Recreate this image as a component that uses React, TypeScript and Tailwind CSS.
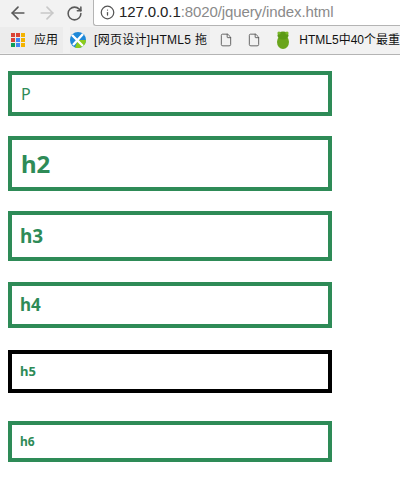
import { RotateCw, ArrowLeft, ArrowRight, Info, File } from 'lucide-react'

const GREEN = 'border-[#2e8b57]'

function AppsIcon() {
  const colors = ['#db4437', '#db4437', '#f4b400', '#db4437', '#4285f4', '#f4b400', '#0f9d58', '#4285f4', '#f4b400']
  return (
    <div className="grid grid-cols-3 gap-px w-[14px] h-[14px]">
      {colors.map((c, i) => <svg key={i} width="4" height="4"><rect width="4" height="4" fill={c} /></svg>)}
    </div>
  )
}

function BallIcon() {
  return (
    <svg width="16" height="16" viewBox="0 0 16 16" className="shrink-0">
      <circle cx="8" cy="8" r="8" fill="#1e88d8" />
      <path d="M8 8 L16 8 A8 8 0 0 1 5 15.4 Z" fill="#8ccc1a" />
      <path d="M2 3 L13 14 M13 2 L3 13" stroke="#fff" strokeWidth="2.4" />
    </svg>
  )
}

function FrogIcon() {
  return (
    <svg width="14" height="18" viewBox="0 0 14 18" className="shrink-0">
      <ellipse cx="7" cy="11" rx="6" ry="7" fill="#6aa51c" />
      <ellipse cx="7" cy="4.5" rx="5.5" ry="4" fill="#5b9a16" />
      <circle cx="3" cy="2" r="1.6" fill="#7ab82a" />
      <circle cx="11" cy="2" r="1.6" fill="#7ab82a" />
    </svg>
  )
}

export default function App() {
  return (
    <div className="h-[481px] w-[400px] overflow-hidden bg-white font-['Noto_Sans',sans-serif]">
      <div className="h-[55px] bg-[#f2f2f2] border-b border-[#b4b4b4] font-['Liberation_Sans','Noto_Sans_CJK_SC',sans-serif]">
        <div className="flex h-[26px] items-center pl-[8px]">
          <ArrowLeft size={20} strokeWidth={2} className="text-[#5a5a5a] shrink-0" />
          <ArrowRight size={20} strokeWidth={2} className="ml-[9px] text-[#c8c8c8] shrink-0" />
          <RotateCw size={17} strokeWidth={2.2} className="ml-[9px] text-[#5a5a5a] shrink-0" />
          <div className="ml-[10px] flex h-[26px] flex-1 items-center rounded-bl-[3px] border-b border-l border-[#b4b4b4] bg-white pl-[6px]">
            <Info size={15} className="text-[#555] shrink-0" />
            <span className="ml-[4px] text-[15px] tracking-[-0.1px] text-[#222]">127.0.0.1</span>
            <span className="text-[15px] tracking-[-0.1px] text-[#8a8a8a]">:8020/jquery/index.html</span>
          </div>
        </div>
        <div className="flex h-[28px] items-center whitespace-nowrap text-[12px] text-[#111]">
          <div className="flex h-[26px] w-[64px] items-center bg-[#ececec] pl-[11px]">
            <AppsIcon />
            <span className="ml-[9px]">应用</span>
          </div>
          <div className="ml-[7px] flex h-[26px] w-[143px] items-center overflow-hidden bg-[#ececec]">
            <BallIcon />
            <span className="ml-[8px] tracking-[0.3px]">[网页设计]HTML5 拖</span>
          </div>
          <File size={14} strokeWidth={1.5} className="ml-[9px] text-[#555] shrink-0" />
          <File size={14} strokeWidth={1.5} className="ml-[14px] text-[#555] shrink-0" />
          <div className="ml-[15px] shrink-0"><FrogIcon /></div>
          <span className="ml-[9px]">HTML5中40个最重</span>
        </div>
      </div>

      <div className="mt-[16px] ml-[8px] flex w-[324px] flex-col text-[#2e8b57]">
        <div className={`flex h-[45px] items-center border-4 ${GREEN} pl-[9px] text-[16px]`}>
          <p>P</p>
        </div>
        <div className={`mt-[20px] flex h-[55px] items-center border-4 ${GREEN} pl-[9px]`}>
          <h2 className="text-[24px] font-bold">h2</h2>
        </div>
        <div className={`mt-[20px] flex h-[50px] items-center border-4 ${GREEN} pl-[8px]`}>
          <h3 className="text-[19px] font-bold">h3</h3>
        </div>
        <div className={`mt-[21px] flex h-[46px] items-center border-4 ${GREEN} pl-[8px]`}>
          <h4 className="text-[17px] font-bold">h4</h4>
        </div>
        <div className="mt-[22px] flex h-[43px] items-center border-4 border-black pl-[8px]">
          <h5 className="text-[13px] font-bold">h5</h5>
        </div>
        <div className={`mt-[28px] flex h-[41px] items-center border-4 ${GREEN} pl-[8px]`}>
          <h6 className="text-[12px] font-bold">h6</h6>
        </div>
      </div>
    </div>
  )
}
